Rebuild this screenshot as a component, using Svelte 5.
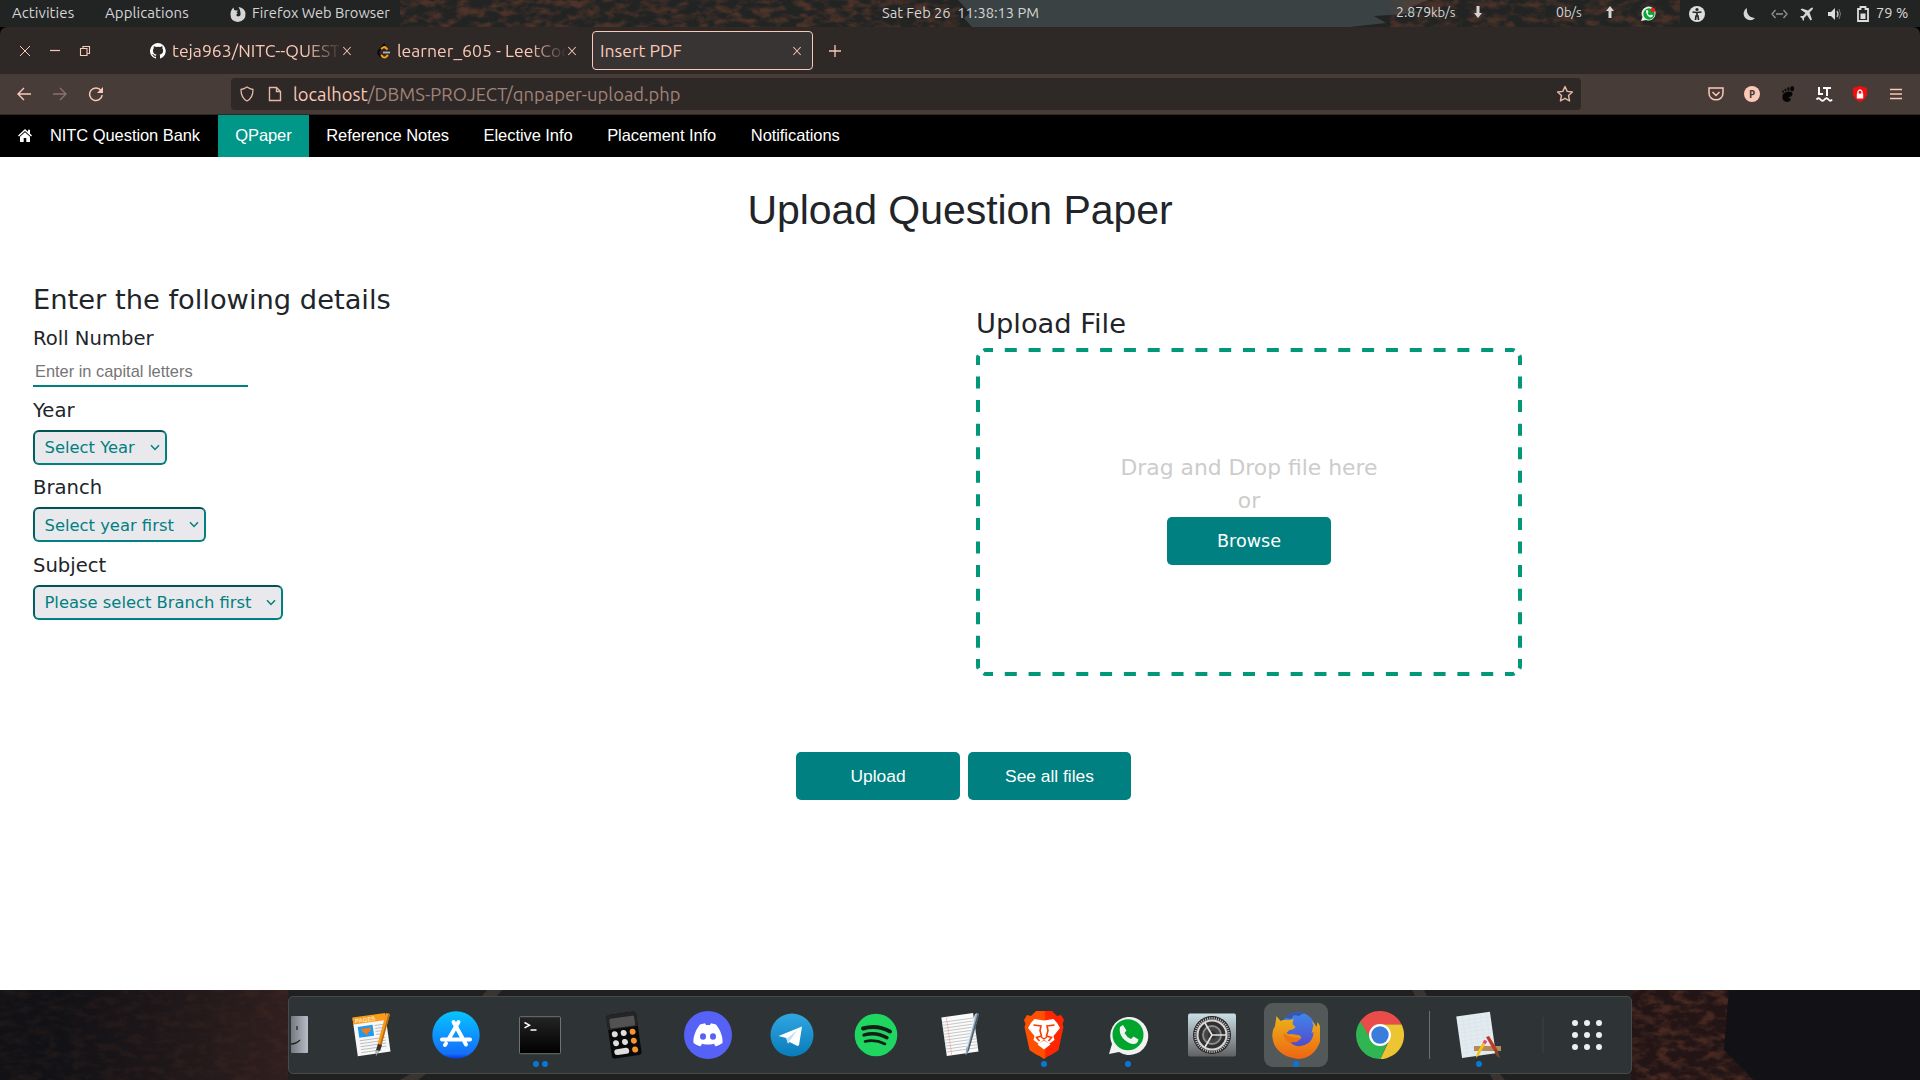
<script>
  const navItems = ['QPaper', 'Reference Notes', 'Elective Info', 'Placement Info', 'Notifications'];
  const fields = [
    { label: 'Year', value: 'Select Year', cls: 'year' },
    { label: 'Branch', value: 'Select year first', cls: 'branch' },
    { label: 'Subject', value: 'Please select Branch first', cls: 'subject' },
  ];
  const launchers = [
    { name: 'pages', dots: 0 },
    { name: 'store', dots: 0 },
    { name: 'terminal', dots: 2 },
    { name: 'calc', dots: 0 },
    { name: 'discord', dots: 0 },
    { name: 'telegram', dots: 0 },
    { name: 'spotify', dots: 0 },
    { name: 'notes', dots: 0 },
    { name: 'brave', dots: 1 },
    { name: 'whatsapp', dots: 1 },
    { name: 'settings', dots: 0 },
    { name: 'firefox', dots: 1 },
    { name: 'chrome', dots: 0 },
  ];
  const teeth = Array.from({ length: 48 }, (_, i) => i * 7.5);
  const grid = [0, 1, 2, 3, 4, 5, 6, 7, 8];
</script>

{#snippet closeMark()}
  <svg width="10" height="10" viewBox="0 0 10 10"><path d="M1.300 1l7.400 8M8.700 1l-7.400 8" stroke="#f1c1b1" stroke-width="1.100" fill="none" /></svg>
{/snippet}

{#snippet launcher(name)}
  <svg width="48" height="48" viewBox="0 0 48 48">
    {#if name === 'pages'}
      <g transform="rotate(-8 24 24)">
        <path d="M7 5h33v38H7z" fill="#f7f7f7" />
        <path d="M7 4h33v7H7z" fill="#fb9b1c" />
        <text x="9" y="10" class="tiny">PAGES</text>
        <path d="M11 14h15v11H11z" fill="#1f9af2" />
        <path d="M14 16l3 1 2-1 2 1 3-1-1 4-3 1-1 3-2-3-2-1z" fill="#f47b15" />
        <path d="M28 15h9M28 18h9M28 21h9M28 24h9M11 28h26M11 31h26M11 34h26M11 37h26M11 40h20" stroke="#b9b9b9" stroke-width=".9" />
      </g>
      <path d="M38 2l4 1-9 33-4-1z" fill="#f39a1e" /><path d="M40.500 2.600l1.500.4-9 33-1.500-.4z" fill="#b96a10" />
      <path d="M30 33l4 1-2 6-4-1z" fill="#333" /><path d="M28 39l3 1-3 5z" fill="#ccd5dc" stroke="#555" stroke-width=".5" />
    {:else if name === 'store'}
      <circle cx="24" cy="24" r="23.700" fill="url(#storeFill)" />
      <g stroke="#fff" stroke-width="4" stroke-linecap="round" fill="none">
        <path d="M10 28.500h19M33.500 28.500H38M26.500 11L17 27.500M21.500 11L34 33.500M14 32.500l-1 1.500" />
      </g>
    {:else if name === 'terminal'}
      <rect x="3.500" y="5.700" width="41" height="37" rx="1" fill="url(#termFill)" stroke="#697573" />
      <path d="M8.500 11.500l5 2.700-5 2.700" stroke="#fff" stroke-width="1.500" fill="none" /><path d="M14.500 19h6" stroke="#fff" stroke-width="1.500" />
    {:else if name === 'calc'}
      <g transform="rotate(-8 24 24)">
        <rect x="9" y="2" width="30" height="44" rx="3" fill="#090909" />
        <path d="M9 17V5q0-3 3-3h24q3 0 3 3v12z" fill="#252525" />
        <rect x="11.500" y="6" width="25" height="10" rx="1.500" fill="#525252" />
        <g fill="#dedede"><circle cx="15" cy="22" r="3" /><circle cx="24" cy="22" r="3" /><circle cx="15" cy="31" r="3" /><circle cx="24" cy="31" r="3" /><rect x="12" y="37" width="15" height="6" rx="3" /></g>
        <g fill="#f7942e"><circle cx="33" cy="22" r="3" /><circle cx="33" cy="31" r="3" /><circle cx="33" cy="40" r="3" /></g>
      </g>
    {:else if name === 'discord'}
      <circle cx="24" cy="24" r="24" fill="#5662f6" />
      <path d="M16 13.500l5-1.300 1 1.800h4l1-1.800 5 1.300c5 6.500 7 13 6.500 18.500-2 1.600-4.500 2.800-7 3.200L30 33l2-1c-5 2-11 2-16 0l2 1-1.500 2.200c-2.500-.4-5-1.600-7-3.200C9 26.500 11 20 16 13.500z" fill="#fff" />
      <ellipse cx="19" cy="25.500" rx="3" ry="3.200" fill="#5662f6" /><ellipse cx="29" cy="25.500" rx="3" ry="3.200" fill="#5662f6" />
    {:else if name === 'telegram'}
      <circle cx="24" cy="24" r="21.500" fill="url(#tgFill)" />
      <path d="M10.500 25L34 15.600l-3 18.700-1.500.8-8-4-1.500 1-1.800-5z" fill="#fff" /><path d="M18.500 28l11-9-8 11-1.500 3z" fill="#bfe0f2" />
    {:else if name === 'spotify'}
      <circle cx="24" cy="24" r="21.300" fill="#1fd760" />
      <g fill="none" stroke="#171d19" stroke-linecap="round"><path d="M11 17.500q14-4 27 3" stroke-width="4" /><path d="M12 24q12-3.500 23 2.800" stroke-width="3.300" /><path d="M13 30.500q10-2.500 20 2.500" stroke-width="2.600" /></g>
    {:else if name === 'notes'}
      <g transform="rotate(-8 24 24)">
        <path d="M8 4h32v39H8z" fill="#fbfbfb" />
        <path d="M8 9h32M8 12h32M8 15h32M8 18h32M8 21h32M8 24h32M8 27h32M8 30h32M8 33h32M8 36h32M8 39h32" stroke="#bdbdbd" stroke-width=".8" /><path d="M13 4v39" stroke="#f1a1a1" stroke-width=".6" />
      </g>
      <path d="M40 2l3 1-10 37-3.500 4.500.5-6z" fill="#91acbf" /><path d="M41.500 3l1.500.4L33 39l-2 3z" fill="#4b5964" /><path d="M39.500 3L31 36" stroke="#e5f1f8" />
    {:else if name === 'brave'}
      <path d="M16 0h16l5 5 4-1 3 5-1.500 4 1 3-5 23c-3 3-9 5-14.500 9C18.500 44 12.500 42 9.500 39l-5-23 1-3L4 9l3-5 4 1z" fill="url(#braveFill)" />
      <path d="M14.500 8l9.500 1.500L33.500 8q4 3.500 6.500 9l-6.500 8 1 4-5.500 4-5-4.500-5 4.500-5.500-4 1-4L8 17q2.500-5.500 6.500-9z" fill="#fff" />
      <path d="M24 29.500l6.500 4L24 38.500l-6.500-5z" fill="#fff" />
      <path d="M13.500 14l7.500 1-1 4.500 1.500 5.500-5 1.500 3 3.500M34.500 14L27 15l1 4.500-1.500 5.500 5 1.500-3 3.500" fill="none" stroke="#fb3b00" stroke-width="1.600" />
      <path d="M21 26l3 2 3-2" stroke="#fb3b00" stroke-width="1.400" fill="none" />
    {:else if name === 'whatsapp'}
      <path d="M5 43l3-10A19 19 0 1 1 15 41z" fill="#f2f2f2" />
      <circle cx="24" cy="23.800" r="15.500" fill="#00a52e" />
      <path d="M16 16l3-2 3.500 5.500-2 2.500q2 4 6.500 6l2.500-2.500 5 3q-1 5-6 4.500C21 31.500 14 24 16 16z" fill="#f2f2f2" />
    {:else if name === 'settings'}
      <rect y="2.500" width="48" height="43" rx="2" fill="url(#setFill)" />
      <circle cx="24" cy="24" r="19" fill="#242424" />
      {#each teeth as a}<path d="M24 6v2.500" stroke="#bdbdbd" stroke-width="1.100" transform="rotate({a} 24 24)" />{/each}
      <circle cx="24" cy="24" r="14.500" fill="#303030" stroke="#d7d7d7" stroke-width="2" />
      <circle cx="24" cy="24" r="9" fill="#444" stroke="#8b8b8b" stroke-width="2" /><circle cx="24" cy="24" r="4" fill="#303030" />
      <path d="M24 24h14M24 24l-7-12M24 24l-7 12" stroke="#e2e2e2" stroke-width="1.600" />
    {:else if name === 'firefox'}
      <circle cx="26" cy="19.500" r="18" fill="url(#globeFill)" /><path d="M12 8q8-9 20-6l-5 3-5-1-3 4-4-1z" fill="#3158b6" />
      <path d="M4.500 5l4 5q4-2 8-1l5-1-1 5 3 3q-2 3-6 3l-3 3q2 2 5 1l7 1q4 1 2 4l-5 2q-3 2-6 1 9 8 19 1 5-4 5-11l-2 1 2-8-2-4q4 3 5 6l1-5q7 9 2 21-6 15-21 16Q8 46 2 33-2 22 3 15z" fill="url(#foxFill)" />
      <path d="M11 22q7 5 17 5-1 5-8 4-6 3-9-9z" fill="#ea7313" />
    {:else if name === 'chrome'}
      <path d="M24 24L4.600 9.900A24 24 0 0 0 24.500 48L33 28z" fill="#30b553" />
      <path d="M24 13.200h21.500A24 24 0 0 1 24.500 48l10-22z" fill="#edc431" />
      <path d="M4.300 10.300L14 27l4-9 6-4.800h21.500A24 24 0 0 0 4.300 10.300z" fill="#e94c49" />
      <circle cx="24" cy="24" r="11" fill="#fff" /><circle cx="24" cy="24" r="8.700" fill="#3a7ddd" />
    {/if}
  </svg>
{/snippet}

<svg class="defs" width="0" height="0">
  <defs>
    <linearGradient id="storeFill" x2="0" y2="1"><stop stop-color="#06c5ff" /><stop offset=".9" stop-color="#146efb" /><stop offset="1" stop-color="#0635d8" /></linearGradient>
    <linearGradient id="termFill" x2="0" y2="1"><stop stop-color="#242424" /><stop offset="1" stop-color="#000" /></linearGradient>
    <linearGradient id="tgFill" x2="0" y2="1"><stop stop-color="#32a6e1" /><stop offset="1" stop-color="#087cb9" /></linearGradient>
    <linearGradient id="setFill" x2="0" y2="1"><stop stop-color="#cbdfe6" /><stop offset="1" stop-color="#626164" /></linearGradient>
    <linearGradient id="braveFill"><stop offset=".5" stop-color="#ff5000" /><stop offset=".55" stop-color="#ff2500" /></linearGradient>
    <linearGradient id="globeFill" x2="0" y2="1"><stop stop-color="#4087ed" /><stop offset="1" stop-color="#5347c9" /></linearGradient>
    <linearGradient id="foxFill" x2="0" y2="1"><stop stop-color="#e9b41a" /><stop offset="1" stop-color="#ef6513" /></linearGradient>
    <linearGradient id="finderFill"><stop stop-color="#737980" /><stop offset="1" stop-color="#b7bec8" /></linearGradient>
    <linearGradient id="duskFill"><stop stop-color="#2a1c1d" stop-opacity="0" /><stop offset="1" stop-color="#301f1f" /></linearGradient>
    <filter id="leaves" x="0" y="0" width="100%" height="100%" color-interpolation-filters="sRGB">
      <feTurbulence type="fractalNoise" baseFrequency=".07 .13" numOctaves="5" seed="8" />
      <feColorMatrix values="0 0 0 0 .42  0 0 0 0 .24  0 0 0 0 .17  3 0 0 0 -1.25" />
    </filter>
  </defs>
</svg>

<div class="desktop">
  <header class="topbar">
    <svg class="top-wall" width="1920" height="27">
      <rect x="400" width="560" height="27" filter="url(#leaves)" opacity=".6" />
      <path d="M958 0h470l-20 8 12 5-46 3 12 7-36 4H972l-8-9 6-5z" fill="#3b4243" />
      <rect x="1390" width="290" height="27" filter="url(#leaves)" opacity=".55" />
    </svg>
    <span class="activities">Activities</span>
    <span class="activities">Applications</span>
    <svg width="16" height="16" viewBox="0 0 16 16"><path d="M3.500 1.500Q3.500 4 5.500 4.500L8 4.500 6.500 6.500 8 8H6.500Q6 10.500 8.500 10.500 11 10 10.500 7 10.500 4 8.500 1q6 1 7 6 .5 8-7.500 9Q.500 15.500.500 8.500.500 4 3.500 1.500z" fill="#d5d5d5" /></svg>
    <span>Firefox Web Browser</span>
    <span>Sat Feb 26&nbsp; 11:38:13 PM</span>
    <span class="rate">2.879<small>kb/s</small></span>
    <svg class="arrow" width="10" height="16" viewBox="0 0 10 16"><path d="M3.500 2h3v7h2.500L5 14 1 9h2.500z" fill="#d5d5d5" /></svg>
    <span class="rate">0<small>b/s</small></span>
    <svg class="arrow" width="10" height="16" viewBox="0 0 10 16"><path d="M3.500 14h3V7h2.500L5 2 1 7h2.500z" fill="#d5d5d5" /></svg>
    <svg width="16" height="16" viewBox="0 0 16 16"><path d="M0 15l1.500-4A7 7 0 1 1 5 14z" fill="#eee" /><circle cx="8" cy="8" r="5.700" fill="#0aa634" /><path d="M5 4.500l1.500-.5 1 2-1 1q1 2 2.500 2.500l1-1 2 1q-.500 2-2.500 2Q5 10 5 4.500z" fill="#fff" /><circle cx="12" cy="4" r="2.300" fill="#e91e1e" /></svg>
    <svg width="16" height="18" viewBox="0 0 16 18"><circle cx="8" cy="9" r="8" fill="#ddd" /><circle cx="8" cy="4.500" r="1.600" fill="#262626" /><path d="M3.500 7L8 7.500l4.500-.5M8 7v4M6.500 15L7 11h2l.500 4" stroke="#262626" stroke-width="1.700" fill="none" /></svg>
    <svg width="13" height="14" viewBox="0 0 13 14"><path d="M4 1a6.500 6.500 0 1 0 8 10C7 11 3 7 4 1z" fill="#d5d5d5" /></svg>
    <svg width="17" height="12" viewBox="0 0 17 12"><path d="M4.500 2L1 6l3.500 4M12.500 2L16 6l-3.500 4M5 6h7" stroke="#929292" stroke-width="1.300" fill="none" /></svg>
    <svg width="14" height="14" viewBox="0 0 14 14"><path d="M11 1q2-1 2 0t-1 2L9.500 5.500l2.500 7-1.500 1-3.500-5.500L4 11v2l-1 1-1-3-2-1 1-1h2l2.500-3L.500 2.500 2 1.500l6 2z" fill="#d5d5d5" /></svg>
    <svg width="14" height="14" viewBox="0 0 14 14"><path d="M0 5h3l4-4v12L3 9H0z" fill="#ddd" /><path d="M9 4q2 3 0 6" stroke="#bbb" stroke-width="1.400" fill="none" /><path d="M11 2q3 5 0 10" stroke="#777" fill="none" /></svg>
    <svg width="12" height="16" viewBox="0 0 12 16"><path d="M1 3h2.500V1h5v2H11v12H1z" fill="none" stroke="#ddd" stroke-width="1.800" /><path d="M3.500 7.500h5V13h-5z" fill="#ddd" /></svg>
    <span class="pct">79 %</span>
  </header>

  <section class="browser">
    <div class="tabs">
      <div class="winbtns">
        <svg width="12" height="12" viewBox="0 0 12 12"><path d="M1 1l10 10M11 1L1 11" stroke="#fbc9b8" stroke-width="1" /></svg>
        <svg width="12" height="12" viewBox="0 0 12 12"><path d="M1 5.500h10" stroke="#fbc9b8" stroke-width="1.200" /></svg>
        <svg width="12" height="12" viewBox="0 0 12 12"><path d="M1.500 3.500h6.500v7H1.500zM4 3.500v-2h6.500v7H8" stroke="#fbc9b8" stroke-width="1.100" fill="none" /></svg>
      </div>
      <div class="tab">
        <svg width="16" height="16" viewBox="0 0 16 16"><path d="M8 0a8 8 0 0 0-2.500 15.600c.4 0 .5-.2.500-.4v-1.500c-2 .4-2.600-1-2.600-1-.4-.9-.9-1.200-.9-1.200-.7-.5 0-.5 0-.5.800 0 1.300.8 1.300.8.700 1.300 1.900.9 2.300.7 0-.5.300-.9.500-1.100-1.800-.2-3.600-.9-3.600-4 0-.9.300-1.600.8-2.100 0-.2-.3-1 .1-2.100 0 0 .7-.2 2.200.8a7.500 7.500 0 0 1 4 0c1.500-1 2.200-.8 2.200-.8.400 1.100.100 1.900 0 2.100.5.500.8 1.200.8 2.100 0 3.100-1.900 3.800-3.600 4 .3.200.5.700.5 1.500v2.200c0 .2.100.5.500.4A8 8 0 0 0 8 0z" fill="#fff" /></svg>
        <span class="title fade">teja963/NITC--QUEST</span>
        {@render closeMark()}
      </div>
      <div class="tab second">
        <svg width="14" height="16" viewBox="0 0 14 16"><path d="M8 1L2 7.500q-1.500 2 0 4L4 14" stroke="#080808" stroke-width="2" fill="none" /><path d="M4 6l2-1.500q1.500-1 3 .5l1.500 1.500M4 12l2 2q1.500 1 3 0l2-2" stroke="#f5a21b" stroke-width="2" fill="none" /><path d="M6 9.500h7" stroke="#b3b3b3" stroke-width="1.800" /></svg>
        <span class="title fade">learner_605 - LeetCoc</span>
        {@render closeMark()}
      </div>
      <div class="tab active">
        <span class="title">Insert PDF</span>
        {@render closeMark()}
      </div>
      <svg class="plus" width="14" height="14" viewBox="0 0 14 14"><path d="M7 1v12M1 7h12" stroke="#fbc9b8" stroke-width="1.300" /></svg>
    </div>

    <div class="toolbar">
      <svg width="16" height="16" viewBox="0 0 16 16"><path d="M15 8H2M8 2L2 8l6 6" stroke="#fbc9b8" stroke-width="1.400" fill="none" /></svg>
      <svg width="16" height="16" viewBox="0 0 16 16"><path d="M1 8h13M8 2l6 6-6 6" stroke="#8d7169" stroke-width="1.400" fill="none" /></svg>
      <svg width="16" height="16" viewBox="0 0 16 16"><path d="M13 4.500A6.300 6.300 0 1 0 14.200 9" stroke="#fbc9b8" stroke-width="1.500" fill="none" /><path d="M15 1v6H9z" fill="#fbc9b8" /></svg>
      <div class="urlbar">
        <svg width="16" height="16" viewBox="0 0 16 16"><path d="M8 1q3 2 6 2.500c0 6-2 9.500-6 11.500C4 13 2 9.500 2 3.500 5 3 8 1 8 1z" stroke="#e5b8a9" stroke-width="1.300" fill="none" /></svg>
        <svg width="14" height="16" viewBox="0 0 14 16"><path d="M1.500 1.500h7l4 4v9h-11zM8.500 1.500v4h4" stroke="#e5b8a9" stroke-width="1.400" fill="none" /></svg>
        <span class="url">localhost<i>/DBMS-PROJECT/qnpaper-upload.php</i></span>
        <svg width="18" height="18" viewBox="0 0 18 18"><path d="M9 1.500l2.200 4.900 5.200.600-3.900 3.500 1.100 5.500L9 13.300 4.400 16l1.100-5.500L1.600 7l5.200-.6z" stroke="#e5b8a9" stroke-width="1.400" fill="none" stroke-linejoin="round" /></svg>
      </div>
      <div class="extensions">
        <svg width="16" height="16" viewBox="0 0 16 16"><path d="M1 2h14v5c0 9-14 9-14 0zM4.500 6L8 9.500 11.500 6" stroke="#fbc9b8" stroke-width="1.500" fill="none" /></svg>
        <span class="avatar">P</span>
        <svg width="14" height="16" viewBox="0 0 14 16"><path d="M2.500 7.500Q5 5.500 8 5.500q4 0 3.500 3-.5 2.300-3 2.500-2 1 0 1.500 1.500-.5 1.500.5-1 3-4 3-4-.5-4.500-4Q1 9 2.500 7.500z" fill="#050505" /><ellipse cx="11.200" cy="2.700" rx="2" ry="2.600" fill="#050505" /><ellipse cx="7.400" cy="2.900" rx="1.100" ry="1.900" fill="#050505" /><ellipse cx="4.500" cy="4" rx=".9" ry="1.500" fill="#050505" /><ellipse cx="2" cy="5.500" rx=".8" ry="1.200" fill="#050505" /></svg>
        <svg width="18" height="16" viewBox="0 0 18 16"><path d="M4 1v7h4M8 2h8M12 2v8" stroke="#fff" stroke-width="2" fill="none" /><path d="M1.500 13.500q2-2.500 4 0t4 0 4 0 3.500 0" stroke="#fff" stroke-width="1.900" fill="none" /></svg>
        <svg width="16" height="16" viewBox="0 0 16 16"><path d="M8 0l7 2v6q-1 5-7 8-6-3-7-8V2z" fill="#f50d0d" /><path d="M4.800 7.500h6.400v5H4.800z" fill="#fff" /><path d="M6 8V5.500q2-3 4 0V8" stroke="#fff" stroke-width="1.300" fill="none" /></svg>
        <svg width="16" height="16" viewBox="0 0 16 16"><path d="M2 3.500h12M2 8h12M2 12.500h12" stroke="#fbc9b8" stroke-width="1.300" /></svg>
      </div>
    </div>

    <nav>
      <a class="home" href="#top">
        <svg width="14" height="13" viewBox="0 0 14 13"><path d="M7 0L0 6.500l1 1L7 2l6 5.500 1-1-2-2V.800h-2v2z" fill="#fff" /><path d="M7 3.200L2 7.700V13h3.700V9h2.600v4H12V7.700z" fill="#fff" /></svg>
        <span>NITC Question Bank</span>
      </a>
      {#each navItems as item, i}
        <a href="#top" class:current={i === 0}>{item}</a>
      {/each}
    </nav>

    <main>
      <h1>Upload Question Paper</h1>
      <div class="columns">
        <div class="details">
          <h3>Enter the following details</h3>
          <label class="lbl" for="roll">Roll Number</label>
          <input id="roll" placeholder="Enter in capital letters" />
          {#each fields as f}
            <div class="lbl">{f.label}</div>
            <div class="select {f.cls}">
              <span>{f.value}</span>
              <svg width="10" height="7" viewBox="0 0 10 7"><path d="M1 1.200l4 4.200 4-4.200" stroke="#008080" stroke-width="1.500" fill="none" /></svg>
            </div>
          {/each}
        </div>
        <div class="upload">
          <h3>Upload File</h3>
          <div class="drop">
            <svg class="dashes" width="546" height="328" viewBox="0 0 546 328">
              <g fill="none" stroke="#009879" stroke-width="4">
                <path d="M28.800 2H520M28.800 326H520" stroke-dasharray="12 11.820" />
                <path d="M2 28.500V310M544 28.500V310" stroke-dasharray="12 11.570" />
                <path d="M7.500 2.600Q8.500 2 10 2h7M2.600 7.500Q2 8.500 2 10v7M538.500 2.600Q537.500 2 536 2h-7M543.400 7.500Q544 8.500 544 10v7M7.500 325.400Q8.500 326 10 326h7M2.600 320.500Q2 319.500 2 318v-7M538.500 325.400Q537.500 326 536 326h-7M543.400 320.500Q544 319.500 544 318v-7" />
              </g>
            </svg>
            <p>Drag and Drop file here</p>
            <p>or</p>
            <button class="browse">Browse</button>
          </div>
        </div>
      </div>
      <div class="actions">
        <button>Upload</button>
        <button class="see">See all files</button>
      </div>
    </main>
  </section>

  <footer>
    <svg class="wall" width="1920" height="90">
      <rect width="1920" height="90" fill="#121216" />
      <path d="M288 0h1343v90H288z" fill="#202020" />
      <rect x="60" width="228" height="90" fill="url(#duskFill)" />
      <rect width="288" height="90" filter="url(#leaves)" opacity=".14" />
      <path d="M482 6l5-6h15l-5 6zM400 90l10-6h16l-8 6zM1412 0h12l3 6h-12zM1490 84h10l5 6h-12z" fill="#3a3431" />
      <path d="M1631 0h98l-5 60 30 30h-123z" fill="#231516" />
      <path d="M1631 0h98l-5 60 30 30h-123z" filter="url(#leaves)" opacity=".5" />
      <path d="M1729 0h50v90h-25l-30-30z" fill="#121216" />
    </svg>
    <div class="dock">
      <svg class="finder" width="17" height="38" viewBox="0 0 17 38"><rect width="17" height="37" rx="1" fill="url(#finderFill)" /><path d="M6 10v4" stroke="#333" stroke-width="1.500" /><path d="M0 28q5 0 9-4" stroke="#222" stroke-width="1.300" fill="none" /></svg>
      {#each launchers as l}
        <div class="cell" class:focused={l.name === 'firefox'}>
          <div class="plate">{@render launcher(l.name)}</div>
          <div class="dots">{#each grid.slice(0, l.dots) as d (d)}<b></b>{/each}</div>
        </div>
      {/each}
      <div class="divider"></div>
      <div class="cell last">
        <div class="plate">
          <svg width="48" height="48" viewBox="0 0 48 48"><g transform="rotate(-8 20 24)"><path d="M4 3h34v42H4z" fill="#e2ebef" /><path d="M6 8h30M6 12h30M6 16h30M6 20h30M6 24h30M6 28h30M6 32h30M6 36h30M6 40h30M10 4v40M16 4v40M22 4v40M28 4v40M34 4v40" stroke="#dae4e8" stroke-width=".7" /></g><path d="M19 35h27v5H19z" fill="#b38a5e" /><path d="M29 29l3 1-8 14-3 3 1-5z" fill="#f3c319" /><path d="M29 29l3 1-1 3-3-1z" fill="#e63ca0" /><path d="M31 26l3-1 8 13-3 2z" fill="#c2382a" /><path d="M39 39l3-1 3 9q-4-1-6-8z" fill="#7d4527" /></svg>
        </div>
        <div class="dots"><b></b></div>
      </div>
      <div class="ghost"></div>
      <div class="apps">{#each grid as g (g)}<b></b>{/each}</div>
    </div>
  </footer>
</div>

<style>
  :global(body) { margin: 0; background: #000; overflow: hidden; }
  * { box-sizing: border-box; }
  svg { display: block; flex: none; }
  .defs { position: absolute; }
  .desktop { width: 1920px; height: 1080px; display: flex; flex-direction: column; overflow: hidden; }

  .topbar { position: relative; height: 27px; flex: none; background: #222424; padding-left: 12px; display: grid; align-items: center;
    grid-template-columns: 93px 125px 22px 630px 514px 77px 83px 49px 36px 48px 54px 28px 29px 28px 29px 19px 1fr;
    font: 14.670px/26px Ubuntu, "Noto Sans", sans-serif; color: #d5d5d5; white-space: nowrap; }
  .topbar > span { height: 27px; line-height: 25px; }
  .topbar > * { position: relative; }
  .topbar > .arrow { align-self: start; margin-top: 4px; }
  .topbar > .top-wall { position: absolute; left: 0; top: 0; }
  .topbar small { font-size: 13px; }
  .topbar > .activities { font-size: 15px; line-height: 26px; letter-spacing: .07px; }
  .topbar > .pct { line-height: 26px; }
  .rate { font-size: 14px; }

  .browser { height: 963px; flex: none; background: linear-gradient(#000 20px, #fff 20px); }
  .tabs { height: 47px; background: #2e2826; display: flex; align-items: center; border-radius: 7px 7px 0 0; font: 17.600px/24px Ubuntu, "Noto Sans", sans-serif; color: #fbc9b8; }
  .winbtns { width: 150px; padding-left: 19px; display: flex; gap: 18px; flex: none; }
  .tab { width: 227px; flex: none; display: flex; align-items: center; }
  .tab .title { flex: none; white-space: nowrap; }
  .tab .fade { margin-left: 6px; width: 170px; -webkit-mask-image: linear-gradient(90deg, #000 78%, transparent); mask-image: linear-gradient(90deg, #000 78%, transparent); }
  .second { width: 215px; }
  .active { width: 221px; height: 39px; border: 1.500px solid #fbc9b8; border-radius: 4px; background: #383434; padding: 0 10px 0 7px; justify-content: space-between; }
  .plus { margin-left: 15px; }

  .toolbar { height: 41px; background: #473c38; border-bottom: 1px solid #302826; display: flex; align-items: center; padding-left: 16px; }
  .toolbar > svg { margin-right: 20px; }
  .urlbar { margin-left: 107px; width: 1350px; height: 32px; border-radius: 4px; background: #2e2826; display: flex; align-items: center; padding: 0 7px 0 8px; }
  .urlbar svg:nth-child(2) { margin-left: 13px; }
  .url { flex: 1; margin-left: 11px; font: 18.330px/30px Ubuntu, "Noto Sans", sans-serif; letter-spacing: .03px; padding-bottom: 1px; color: #fbc9b8; white-space: nowrap; }
  .url i { font-style: normal; color: #a0837a; }
  .extensions { margin-left: 117px; display: grid; grid-template-columns: repeat(6, 36px); align-items: center; }
  .extensions svg, .extensions .avatar { justify-self: center; }
  .avatar { width: 16px; height: 16px; border-radius: 50%; background: #fbc9b8; color: #473c38; font: bold 10px/16px "Noto Sans", sans-serif; text-align: center; }

  nav { height: 42px; background: #000; display: flex; font: 16.500px/41px "Liberation Sans", Arial, sans-serif; letter-spacing: -.07px; }
  nav a { padding: 0 17.400px 0 17.200px; color: #fff; text-decoration: none; white-space: nowrap; }
  nav .home { width: 218px; height: 41px; padding: 0 0 0 18px; display: flex; align-items: center; gap: 18px; }
  .current { background: #009688; }

  main { color: #212529; font-family: "DejaVu Sans", sans-serif; }
  h1 { margin: 0; padding-top: 26px; font: 400 41px/54px "Liberation Sans", Arial, sans-serif; letter-spacing: -.05px; text-align: center; }
  h3 { margin: 0; font-size: 27.300px; line-height: 34px; font-weight: 400; white-space: nowrap; }
  .columns { display: grid; grid-template-columns: 943px 546px; padding: 45px 0 0 33px; height: 515px; }
  .lbl { display: block; font-size: 19.600px; line-height: 26px; }
  .details h3 { height: 44px; line-height: 36px; }
  input { display: block; width: 215px; height: 31px; margin: 0 0 11px; border: 0; border-bottom: 2px solid #008080; padding: 3px 2px 1px; font: 16.400px "Liberation Sans", Arial, sans-serif; background: none; }
  label.lbl { height: 30px; }
  .details div.lbl { height: 32px; }
  input::placeholder { color: #757575; opacity: 1; }
  .select { height: 35px; margin-bottom: 10px; border: 2px solid #008080; border-top-color: #005454; border-left-color: #005f5f; border-radius: 6px; background: #e9e9ed; color: #008080; font-size: 16.370px; line-height: 31px; display: flex; justify-content: space-between; align-items: center; padding: 0 5px 0 9.500px; white-space: nowrap; }
  .year { width: 134px; }
  .branch { width: 173px; margin-bottom: 11px; }
  .branch span { padding-top: 2px; }
  .subject { width: 250px; }
  .upload h3 { margin-top: 25px; height: 41px; }
  .drop { position: relative; height: 328px; display: flex; flex-direction: column; align-items: center; padding-top: 103px; }
  .dashes { position: absolute; left: 0; top: 0; }
  .drop p { margin: 0; font-size: 21.850px; line-height: 33px; color: #ccc; white-space: nowrap; }
  button { width: 164px; height: 48px; border: 0; border-radius: 5px; padding: 0; background: #008080; color: #fff; font: 17.400px "Liberation Sans", Arial, sans-serif; }
  .browse { font: 17.600px "DejaVu Sans", sans-serif; }
  .see { width: 163px; }
  .actions { display: flex; gap: 8px; padding-left: 796px; }

  footer { position: relative; height: 90px; padding: 6px 0 0 288px; }
  .wall { position: absolute; left: 0; top: 0; }
  .dock { position: relative; width: 1344px; height: 78px; background: #2e3436; border: 1px solid #474a4a; border-radius: 5px; display: flex; align-items: center; }
  .finder { width: 17px; margin: 0 22px 0 2px; }
  .cell { width: 84px; height: 76px; flex: none; position: relative; display: flex; align-items: center; justify-content: center; }
  .plate { width: 64px; height: 64px; border-radius: 9px; display: grid; place-items: center; }
  .focused .plate { background: #535858; }
  .dots { position: absolute; left: 0; right: 0; bottom: 6px; display: flex; justify-content: center; gap: 3px; }
  .dots b { width: 6px; height: 6px; border-radius: 50%; background: #0878d8; }
  .divider { width: 1px; height: 48px; background: #6b7071; margin-left: 7px; }
  .last { margin-left: 7px; }
  .ghost { width: 2px; height: 36px; background: #353b3d; margin-left: 21px; }
  .apps { display: grid; grid-template-columns: repeat(3, 6px); gap: 6px; margin-left: 28px; }
  .apps b { width: 6px; height: 6px; border-radius: 50%; background: #eee; }
  .tiny { font: bold 6px "Liberation Sans", sans-serif; fill: #ffe9c0; }
</style>
